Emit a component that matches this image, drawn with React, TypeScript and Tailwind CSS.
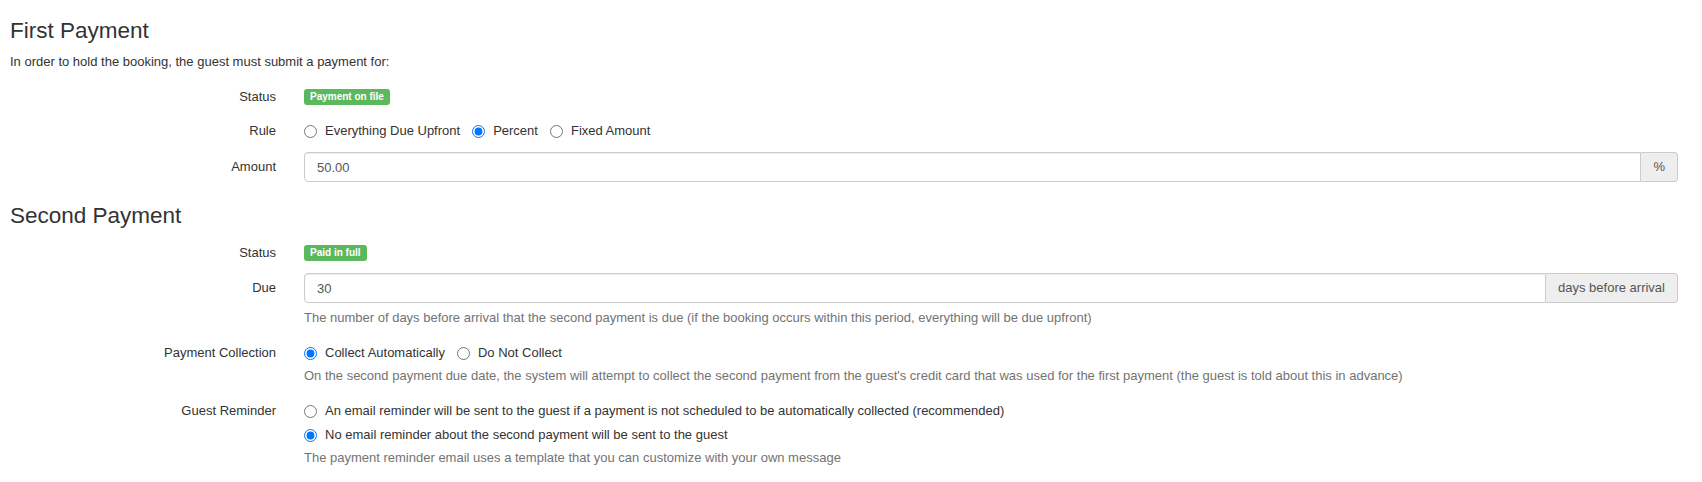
import React from "react";

const font = { fontFamily: '"Liberation Sans", Arial, Helvetica, sans-serif' };

function Label({ children, input }: { children: React.ReactNode; input?: boolean }) {
  return (
    <div
      className={
        "w-[276px] shrink-0 text-right text-[13px] text-[#333] " +
        (input ? "h-[30px] flex items-center justify-end" : "leading-[18px]")
      }
    >
      {children}
    </div>
  );
}

function Badge({ children }: { children: React.ReactNode }) {
  return (
    <span className="inline-flex h-4 items-center rounded-[3px] bg-[#5cb85c] px-[6px] text-[10px] font-bold leading-none text-white">
      {children}
    </span>
  );
}

function Radio({ label, checked, name }: { label: string; checked?: boolean; name: string }) {
  return (
    <label className="flex items-center gap-2 text-[13px] leading-[18px] text-[#333]">
      <input
        type="radio"
        name={name}
        defaultChecked={checked}
        className="m-0 h-[13px] w-[13px] accent-[#0075ff]"
      />
      <span>{label}</span>
    </label>
  );
}

function Help({ children }: { children: React.ReactNode }) {
  return <div className="text-[13px] leading-[18px] text-[#737373]">{children}</div>;
}

function InputGroup({ value, addon }: { value: string; addon: string }) {
  return (
    <div className="flex h-[30px] w-full">
      <input
        readOnly
        value={value}
        className="h-full min-w-0 flex-1 rounded-l-[4px] border border-[#ccc] bg-white px-3 text-[13px] text-[#555] shadow-[inset_0_1px_1px_rgba(0,0,0,0.075)] outline-none"
        style={font}
      />
      <div className="flex h-full items-center rounded-r-[4px] border border-l-0 border-[#ccc] bg-[#eee] px-3 text-[13px] text-[#555]">
        {addon}
      </div>
    </div>
  );
}

function Row({ children, className = "" }: { children: React.ReactNode; className?: string }) {
  return <div className={"flex " + className}>{children}</div>;
}

function Control({ children }: { children: React.ReactNode }) {
  return <div className="ml-[28px] mr-[24px] flex min-w-0 flex-1 flex-col">{children}</div>;
}

export default function App() {
  return (
    <div className="min-h-[482px] w-full bg-white text-[#333]" style={font}>
      <div className="px-[10px] pt-[18px]">
        <h3 className="text-[22.5px] font-normal leading-[26px] text-[#333]">First Payment</h3>
        <p className="mt-[9px] text-[13px] leading-[18px] text-[#333]">
          In order to hold the booking, the guest must submit a payment for:
        </p>
      </div>

      <Row className="mt-[17px]">
        <Label>Status</Label>
        <Control>
          <div className="flex h-[18px] items-center">
            <Badge>Payment on file</Badge>
          </div>
        </Control>
      </Row>

      <Row className="mt-[16px]">
        <Label>Rule</Label>
        <Control>
          <div className="flex items-center gap-[12px]">
            <Radio name="rule" label="Everything Due Upfront" />
            <Radio name="rule" label="Percent" checked />
            <Radio name="rule" label="Fixed Amount" />
          </div>
        </Control>
      </Row>

      <Row className="mt-[12px]">
        <Label input>Amount</Label>
        <Control>
          <InputGroup value="50.00" addon="%" />
        </Control>
      </Row>

      <div className="mt-[21px] px-[10px]">
        <h3 className="text-[22.5px] font-normal leading-[26px] text-[#333]">Second Payment</h3>
      </div>

      <Row className="mt-[15px]">
        <Label>Status</Label>
        <Control>
          <div className="flex h-[18px] items-center">
            <Badge>Paid in full</Badge>
          </div>
        </Control>
      </Row>

      <Row className="mt-[11px]">
        <div className="flex flex-col">
          <Label input>Due</Label>
        </div>
        <Control>
          <InputGroup value="30" addon="days before arrival" />
          <div className="mt-[6px]">
            <Help>
              The number of days before arrival that the second payment is due (if the booking occurs within this
              period, everything will be due upfront)
            </Help>
          </div>
        </Control>
      </Row>

      <Row className="mt-[17px]">
        <div>
          <Label>Payment Collection</Label>
        </div>
        <Control>
          <div className="flex items-center gap-[12px]">
            <Radio name="collect" label="Collect Automatically" checked />
            <Radio name="collect" label="Do Not Collect" />
          </div>
          <div className="mt-[5px]">
            <Help>
              On the second payment due date, the system will attempt to collect the second payment from the guest's
              credit card that was used for the first payment (the guest is told about this in advance)
            </Help>
          </div>
        </Control>
      </Row>

      <Row className="mt-[17px] pb-[15px]">
        <div>
          <Label>Guest Reminder</Label>
        </div>
        <Control>
          <Radio
            name="remind"
            label="An email reminder will be sent to the guest if a payment is not scheduled to be automatically collected (recommended)"
          />
          <div className="mt-[6px]">
            <Radio name="remind" label="No email reminder about the second payment will be sent to the guest" checked />
          </div>
          <div className="mt-[5px]">
            <Help>The payment reminder email uses a template that you can customize with your own message</Help>
          </div>
        </Control>
      </Row>
    </div>
  );
}
